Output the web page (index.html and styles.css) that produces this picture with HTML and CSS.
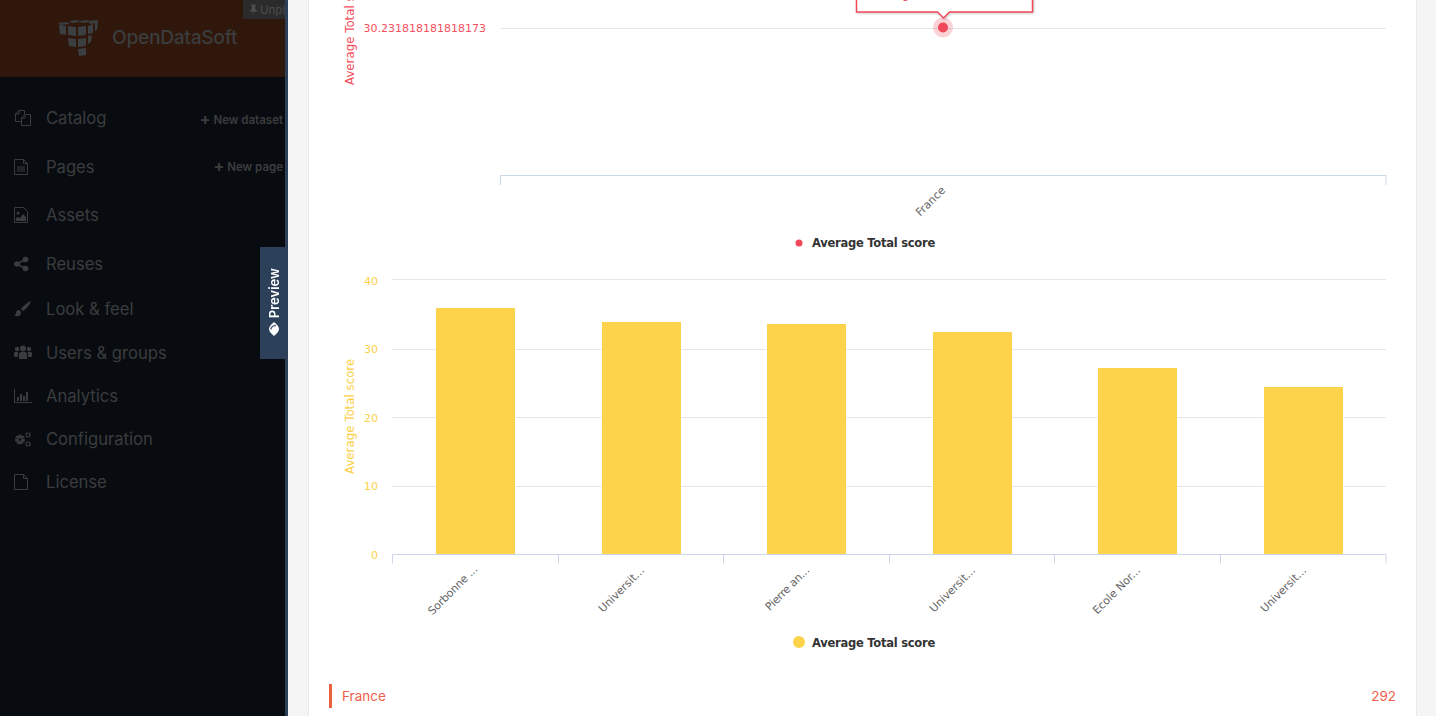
FILE: index.html
```html
<!DOCTYPE html>
<html lang="en">
<head>
    <meta charset="UTF-8">
    <title>OpenDataSoft - Back office</title>
    <link rel="stylesheet" href="styles.css">
</head>
<body>
    <div class="sidebar">
        <div class="brand">
            <div class="unpin">
                <svg class="pin-icon" viewBox="0 0 10 12"><path d="M2 0h6v1H7v4l2 2v1H5.500L5 12l-.5-4H1V7l2-2V1H2z"/></svg>
                <span>Unpin</span>
            </div>
            <svg class="logo" viewBox="0 0 42 36">
                <path d="M0 3l9-1 3 2-9 1zM11 1l8-1 3 2-8 1zM21 1l9-1 2 2-8 1zM31 1l9-1-1 3-7 1z"/>
                <path d="M1 5l7 1v9l-6-1zM10 6l8 1v9l-8-1zM20 7l8-1v9l-8 1zM30 6l5-2v9l-5 1zM37 3l3-1-1 8-2 1z"/>
                <path d="M10 18l8 1v8l-7-1zM20 19l8-1v8l-8 1zM30 16l4-1-1 7-3 2z"/>
                <path d="M20 29l8-1v7l-7 1z"/>
            </svg>
            <span class="brand-name">OpenDataSoft</span>
        </div>
        <ul class="nav">
            <li class="nav-item tall">
                <svg class="nav-icon" viewBox="0 0 18 16"><path class="line" d="M7 11.500H1.500V4L5 .5h5.500V4M7.500 8L11 4.500h5.500v11h-9zM5 .5V4H1.500M11 4.500V8H7.500"/></svg>
                <span>Catalog</span>
                <span class="nav-action low"><span class="plus">+</span> New dataset</span>
            </li>
            <li class="nav-item tall">
                <svg class="nav-icon" viewBox="0 0 18 16"><path class="line" d="M.5 .5h9l4 4v11H.5zM9.500 .5v4h4M3 8h8M3 10h8M3 12h8"/></svg>
                <span>Pages</span>
                <span class="nav-action"><span class="plus">+</span> New page</span>
            </li>
            <li class="nav-item tall">
                <svg class="nav-icon" viewBox="0 0 18 16"><path class="line" d="M.5 .5h9l4 4v11H.5z"/><circle cx="4" cy="6" r="1.500"/><path d="M2 14v-3l2-1 2 1 3-4 3 3v4z"/></svg>
                <span>Assets</span>
            </li>
            <li class="nav-item tall">
                <svg class="nav-icon" viewBox="0 0 18 16"><circle cx="3" cy="8" r="2.800"/><circle cx="11.500" cy="3.500" r="2.800"/><circle cx="11.500" cy="12.500" r="2.800"/><path class="line thick" d="M3 8l8.500-4.500M3 8l8.500 4.500"/></svg>
                <span>Reuses</span>
            </li>
            <li class="nav-item">
                <svg class="nav-icon" viewBox="0 0 18 16"><path d="M17 0c-3 1-8 5-10 8l2 2c3-2 7-6 8-10zM5 9c-2 0-3 1-3 3 0 1-1 2-2 2 2 2 7 2 7-2 0-1-1-3-2-3z"/></svg>
                <span>Look &amp; feel</span>
            </li>
            <li class="nav-item">
                <svg class="nav-icon" viewBox="0 0 18 16"><circle cx="3" cy="4" r="2.200"/><circle cx="9" cy="3.500" r="3"/><circle cx="15" cy="4" r="2.200"/><path d="M0 11V8q0-1 2-1h2v5H1zM18 11V8q0-1-2-1h-2v5h3zM5 14V9q0-2 2-2h4q2 0 2 2v5z"/></svg>
                <span>Users &amp; groups</span>
            </li>
            <li class="nav-item">
                <svg class="nav-icon" viewBox="0 0 18 16"><path class="line" d="M.5 1v13.500H18"/><path d="M3 9h2v4H3zM6 6h2v7H6zM9 8h2v5H9zM12 4h2v9h-2z"/></svg>
                <span>Analytics</span>
            </li>
            <li class="nav-item">
                <svg class="nav-icon" viewBox="0 0 18 16"><circle class="gear" cx="6" cy="8.500" r="3.500"/><circle class="gear" cx="6" cy="8.500" r="2.500"/><circle class="gear small" cx="14" cy="4" r="2"/><circle class="gear small" cx="14" cy="13" r="2"/></svg>
                <span>Configuration</span>
            </li>
            <li class="nav-item">
                <svg class="nav-icon" viewBox="0 0 18 16"><path class="line" d="M.5 .5h9l4 4v11H.5zM9.500 .5v4h4"/></svg>
                <span>License</span>
            </li>
        </ul>
        <div class="preview-tab">
            <svg class="eye-icon" viewBox="0 0 10 14">
                <path d="M5 0Q10 4 10 7T5 14Q0 10 0 7T5 0z"/>
                <path class="eye-band" d="M1.800 7.500Q2.500 3.500 7 3.500"/>
            </svg>
            <span>Preview</span>
        </div>
    </div>

    <div class="content">
        <div class="card">
            <svg class="chart chart-top" viewBox="309 0 1107 260">
                <line class="grid" x1="501" y1="28.500" x2="1386" y2="28.500"/>
                <text class="axis-title red" transform="translate(354 85) rotate(-90)">Average Total score</text>
                <text class="tick red" x="486" y="32" text-anchor="end">30.231818181818173</text>
                <path class="axis" d="M500.500 185v-9.500h885.500v9.500"/>
                <text class="cat" transform="translate(946 191) rotate(-45)" text-anchor="end">France</text>
                <circle class="halo" cx="943" cy="27.500" r="10"/>
                <circle class="dot" cx="943" cy="27.500" r="5"/>
                <path class="tooltip" d="M856.500-20h176v32h-83l-6 6-6-6h-81z"/>
                <text class="tooltip-text" x="944" y="-1" text-anchor="middle">Average Total score: 30.23</text>
                <circle class="dot" cx="799" cy="243" r="3.500"/>
                <text class="legend" x="812" y="247">Average Total score</text>
            </svg>

            <svg class="chart chart-bars" viewBox="309 260 1107 410">
                <line class="grid" x1="392" y1="279.500" x2="1386" y2="279.500"/>
                <line class="grid" x1="392" y1="349.500" x2="1386" y2="349.500"/>
                <line class="grid" x1="392" y1="417.500" x2="1386" y2="417.500"/>
                <line class="grid" x1="392" y1="486.500" x2="1386" y2="486.500"/>
                <text class="axis-title yellow" transform="translate(354 474) rotate(-90)">Average Total score</text>
                <text class="tick yellow" x="378" y="285" text-anchor="end">40</text>
                <text class="tick yellow" x="378" y="353" text-anchor="end">30</text>
                <text class="tick yellow" x="378" y="422" text-anchor="end">20</text>
                <text class="tick yellow" x="378" y="490" text-anchor="end">10</text>
                <text class="tick yellow" x="378" y="559" text-anchor="end">0</text>
                <rect class="bar" x="436" y="308" width="79" height="246"/>
                <rect class="bar" x="602" y="322" width="79" height="232"/>
                <rect class="bar" x="767" y="324" width="79" height="230"/>
                <rect class="bar" x="933" y="332" width="79" height="222"/>
                <rect class="bar" x="1098" y="368" width="79" height="186"/>
                <rect class="bar" x="1264" y="387" width="79" height="167"/>
                <path class="axis" d="M392.500 563.500v-9h993.500v9M558.500 554.500v9M723.500 554.500v9M889.500 554.500v9M1054.500 554.500v9M1220.500 554.500v9"/>
                <text class="cat tight" transform="translate(478 570) rotate(-45)" text-anchor="end">Sorbonne ...</text>
                <text class="cat" transform="translate(645 571) rotate(-45)" text-anchor="end">Universit...</text>
                <text class="cat tight" transform="translate(810 571) rotate(-45)" text-anchor="end">Pierre an...</text>
                <text class="cat" transform="translate(976 571) rotate(-45)" text-anchor="end">Universit...</text>
                <text class="cat" transform="translate(1141 571) rotate(-45)" text-anchor="end">Ecole Nor...</text>
                <text class="cat" transform="translate(1307 571) rotate(-45)" text-anchor="end">Universit...</text>
                <circle class="bar" cx="799" cy="642" r="6"/>
                <text class="legend" x="812" y="647">Average Total score</text>
            </svg>

            <div class="stat-row">
                <span>France</span>
                <span>292</span>
            </div>
        </div>
    </div>
</body>
</html>
```

FILE: styles.css
```css
html, body {
    height: 716px;
    overflow: hidden;
}

body {
    margin: 0;
    display: flex;
    font-family: Inter, "Liberation Sans", sans-serif;
    background-color: #f5f5f5;
}

.sidebar {
    position: relative;
    width: 285px;
    flex-shrink: 0;
    background-color: #080c11;
    border-right: 3px solid #2d4059;
    color: #3b3c3e;
}

.brand {
    position: relative;
    height: 77px;
    box-sizing: border-box;
    padding: 20px 0 0 58px;
    display: flex;
    align-items: flex-start;
    background-color: #2f170c;
}

.logo {
    width: 42px;
    height: 36px;
    fill: #3c3f42;
}

.brand-name {
    margin: 5px 0 0 12px;
    font-size: 19.200px;
    line-height: 24px;
    font-weight: 500;
    letter-spacing: -0.3px;
}

.unpin {
    position: absolute;
    top: 0;
    right: 0;
    width: 42px;
    height: 19px;
    box-sizing: border-box;
    padding-left: 6px;
    overflow: hidden;
    display: flex;
    align-items: center;
    gap: 2px;
    background-color: #2b2b2c;
    color: #4b4c4e;
    font-size: 11.500px;
    white-space: nowrap;
}

.pin-icon {
    width: 9px;
    height: 12px;
    flex-shrink: 0;
    fill: #4b4c4e;
}

.nav {
    list-style: none;
    margin: 0;
    padding: 17.300px 0 0;
}

.nav-item {
    height: 43.200px;
    display: flex;
    align-items: center;
    padding: 0 2px 0 14px;
    font-size: 16.600px;
}

.nav-item.tall {
    height: 48.400px;
}

.nav-icon {
    width: 18px;
    height: 16px;
    margin-right: 14px;
    flex-shrink: 0;
    fill: #3b3c3e;
}

.nav-icon .line {
    fill: none;
    stroke: #3b3c3e;
    stroke-width: 1;
}

.nav-icon .line.thick {
    stroke-width: 1.500;
}

.nav-icon .gear {
    fill: none;
    stroke: #3b3c3e;
    stroke-width: 3;
    stroke-dasharray: 2.200 .8;
}

.nav-icon .gear.small {
    stroke-width: 1.500;
}

.nav-action {
    margin-left: auto;
    font-size: 11.500px;
    font-weight: 600;
    white-space: nowrap;
}

.nav-action.low {
    margin-top: 4px;
}

.plus {
    font-size: 16px;
    font-weight: 700;
    line-height: 12px;
    vertical-align: -1px;
}

.preview-tab {
    position: absolute;
    top: 247px;
    right: -3px;
    width: 28px;
    height: 112px;
    box-sizing: border-box;
    padding-bottom: 23px;
    display: flex;
    flex-direction: column-reverse;
    align-items: center;
    gap: 4px;
    background-color: #2d4059;
    color: #fff;
    font-size: 13px;
    font-weight: 600;
}

.preview-tab span {
    writing-mode: vertical-rl;
    transform: rotate(180deg);
    line-height: 14px;
}

.eye-icon {
    width: 10px;
    height: 14px;
    fill: #fff;
}

.eye-band {
    fill: none;
    stroke: #5d6f84;
    stroke-width: 1.500;
}

.content {
    flex: 1;
    padding: 0 19px 0 20px;
    min-width: 0;
}

.card {
    height: 716px;
    background-color: #fff;
    border-left: 1px solid #e8e8e8;
    border-right: 1px solid #e8e8e8;
}

.chart {
    display: block;
    width: 1107px;
    overflow: hidden;
    font-family: "DejaVu Sans", sans-serif;
}

.chart-top {
    height: 260px;
}

.chart-bars {
    height: 410px;
}

.grid {
    stroke: #e6e6e6;
    stroke-width: 1;
}

.axis {
    fill: none;
    stroke: #ccd6eb;
    stroke-width: 1;
}

.axis-title {
    font-size: 11.800px;
}

.tick {
    font-size: 11px;
}

.red {
    fill: #f4505e;
}

.yellow {
    fill: #fdd049;
}

.cat {
    font-size: 11px;
    fill: #666;
}

.cat.tight {
    letter-spacing: -0.2px;
}

.legend {
    font-size: 11.500px;
    font-weight: 700;
    letter-spacing: -0.25px;
    fill: #333;
}

.bar {
    fill: #fcd34a;
}

rect.bar {
    stroke: #fff;
    stroke-width: 1;
    paint-order: stroke;
}

.dot {
    fill: #f04a5a;
}

.halo {
    fill: #f04a5a;
    opacity: 0.25;
}

.tooltip {
    fill: #fff;
    stroke: #f04a5a;
    stroke-width: 1.500;
    filter: drop-shadow(1px 1px 1px rgba(0, 0, 0, 0.2));
}

.tooltip-text {
    font-size: 11px;
    fill: #f04a5a;
}

.stat-row {
    display: flex;
    justify-content: space-between;
    align-items: center;
    height: 24px;
    margin: 14px 20px 0;
    padding: 0 0 0 10px;
    border-left: 3px solid #e9603e;
    font-size: 13.500px;
    color: #f0604a;
}
```
